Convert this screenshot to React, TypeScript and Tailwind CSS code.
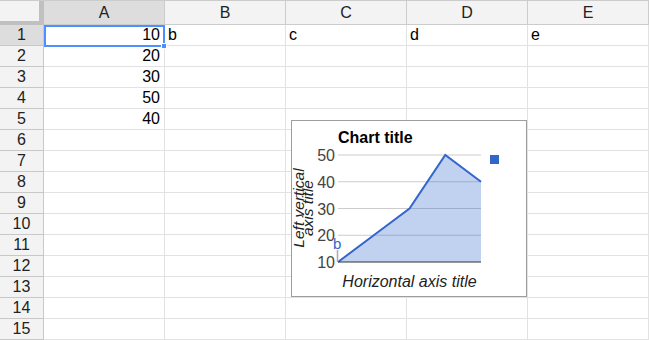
import clsx from 'clsx';

const columns = ['A', 'B', 'C', 'D', 'E'];
const rowCount = 15;

const cells: Record<string, { text: string; right?: boolean }> = {
  'A1': { text: '10', right: true },
  'A2': { text: '20', right: true },
  'A3': { text: '30', right: true },
  'A4': { text: '50', right: true },
  'A5': { text: '40', right: true },
  'B1': { text: 'b' },
  'C1': { text: 'c' },
  'D1': { text: 'd' },
  'E1': { text: 'e' },
};

const values = [10, 20, 30, 50, 40];

function Chart() {
  const left = 46;
  const right = 189;
  const top = 34;
  const bottom = 141;
  const yFor = (v: number) => bottom - ((v - 10) / 40) * (bottom - top);
  const xFor = (i: number) => left + (i * (right - left)) / (values.length - 1);
  const pts = values.map((v, i) => `${xFor(i)},${yFor(v)}`).join(' ');
  const area = `${left},${bottom} ${pts} ${right},${bottom}`;

  return (
    <div className="absolute left-[291px] top-[120px] w-[236px] h-[177px] bg-white border border-[#9e9e9e]">
      <svg width="234" height="175" className="block">
        <text x={46} y={22} fontSize="16" fontWeight="bold" fill="#000">Chart title</text>

        {[50, 40, 30, 20].map((v) => (
          <line key={v} x1={left} x2={right} y1={yFor(v)} y2={yFor(v)} stroke="#cccccc" strokeWidth="1" />
        ))}
        {[50, 40, 30, 20, 10].map((v) => (
          <text key={v} x={43} y={yFor(v) + 6} fontSize="16" textAnchor="end" fill="#444">{v}</text>
        ))}

        <polygon points={area} fill="#3366cc" fillOpacity="0.3" />
        <polyline points={pts} fill="none" stroke="#3366cc" strokeWidth="2" />
        <line x1={left} x2={right} y1={bottom} y2={bottom} stroke="#333" strokeWidth="1" />
        <line x1={45.5} x2={45.5} y1={129} y2={bottom} stroke="#aaa" strokeWidth="1.5" />
        <text x={41} y={128} fontSize="15" fill="#3366cc">b</text>

        <rect x={198} y={34} width="9" height="9" fill="#3366cc" />

        <text x={117.5} y={166} fontSize="16" fontStyle="italic" textAnchor="middle" fill="#222">Horizontal axis title</text>

        <g transform="translate(12,87) rotate(-90)">
          <text x={0} y={0} fontSize="15.5" fontStyle="italic" textAnchor="middle" fill="#222">Left vertical</text>
        </g>
        <g transform="translate(21,87) rotate(-90)">
          <text x={0} y={0} fontSize="15.5" fontStyle="italic" textAnchor="middle" fill="#222">axis title</text>
        </g>
      </svg>
    </div>
  );
}

export default function App() {
  const rows = Array.from({ length: rowCount }, (_, i) => i + 1);

  return (
    <div className="relative w-[649px] h-[340px] overflow-hidden bg-white font-['Liberation_Sans',Arial,sans-serif] text-black">
      {/* Column headers */}
      <div className="flex h-[25px] border-t border-[#cccccc]">
        <div className="w-[44px] shrink-0 bg-[#f3f3f3] border-r-[5px] border-b-[4px] border-[#c0c0c0]" />
        {columns.map((c) => (
          <div
            key={c}
            className={clsx(
              'w-[121px] shrink-0 flex items-center justify-center border-r border-b border-[#cccccc] text-[16px] text-[#222]',
              c === 'A' ? 'bg-[#dddddd]' : 'bg-[#f3f3f3]'
            )}
          >
            {c}
          </div>
        ))}
      </div>

      {/* Rows */}
      {rows.map((r) => (
        <div key={r} className="flex h-[21px]">
          <div
            className={clsx(
              'w-[44px] shrink-0 flex items-center justify-center border-r border-b border-[#c8c8c8] text-[16px] text-[#222]',
              r === 1 ? 'bg-[#dddddd]' : 'bg-[#f3f3f3]'
            )}
          >
            {r}
          </div>
          {columns.map((c) => {
            const cell = cells[`${c}${r}`];
            return (
              <div
                key={c}
                className={clsx(
                  'w-[121px] shrink-0 flex items-center px-[3px] border-r border-b border-[#e2e2e2] text-[16px] leading-none',
                  cell?.right ? 'justify-end pr-[4px]' : 'justify-start'
                )}
              >
                {cell?.text}
              </div>
            );
          })}
        </div>
      ))}

      {/* Selected cell A1 */}
      <div className="absolute left-[44px] top-[25px] w-[121px] h-[22px] border-2 border-[#4d90fe] pointer-events-none" />
      <div className="absolute left-[161px] top-[43px] w-[6px] h-[6px] bg-[#4d90fe] border border-white" />

      <Chart />
    </div>
  );
}
